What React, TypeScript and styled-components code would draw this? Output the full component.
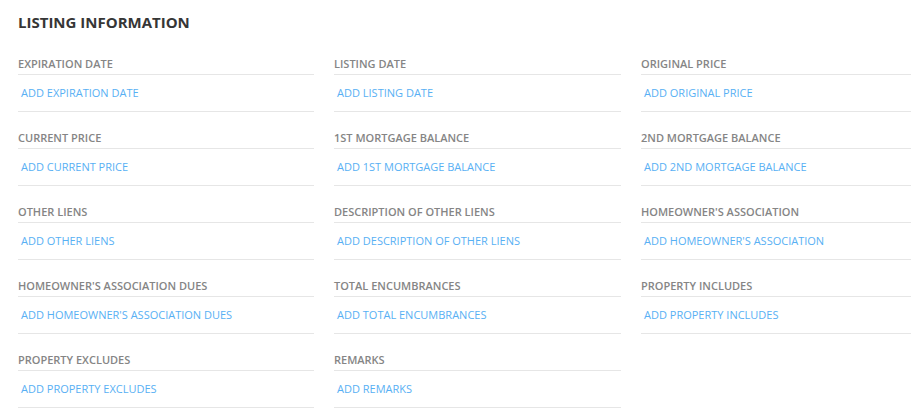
import styled, { createGlobalStyle } from "styled-components";

const GlobalStyle = createGlobalStyle`
  html, body {
    margin: 0;
    padding: 0;
    background: #fff;
    font-family: "Open Sans", "Liberation Sans", sans-serif;
  }
`;

const fields = [
  "Expiration Date",
  "Listing Date",
  "Original Price",
  "Current Price",
  "1st Mortgage Balance",
  "2nd Mortgage Balance",
  "Other Liens",
  "Description of Other Liens",
  "Homeowner's Association",
  "Homeowner's Association Dues",
  "Total Encumbrances",
  "Property Includes",
  "Property Excludes",
  "Remarks",
];

const Section = styled.section`
  padding: 12px 0 0 18px;
`;

const Title = styled.h2`
  margin: 0 0 24px;
  font-size: 15px;
  line-height: 20px;
  font-weight: 700;
  color: #363636;
  text-transform: uppercase;
`;

const Grid = styled.div`
  display: grid;
  grid-template-columns: 296px 287px 270px;
  column-gap: 20px;
  row-gap: 18px;
`;

const Field = styled.div`
  display: flex;
  flex-direction: column;
`;

const Label = styled.div`
  font-size: 11px;
  line-height: 16px;
  font-weight: 600;
  color: #858585;
  text-transform: uppercase;
  padding-bottom: 2px;
  border-bottom: 1px solid #e6e6e6;
`;

const AddLink = styled.a`
  display: block;
  padding: 10px 0 10px 3px;
  font-size: 11px;
  line-height: 16px;
  color: #58b0f4;
  text-transform: uppercase;
  text-decoration: none;
  cursor: pointer;
  border-bottom: 1px solid #e6e6e6;
`;

export default function App() {
  return (
    <>
      <GlobalStyle />
      <Section>
        <Title>Listing Information</Title>
        <Grid>
          {fields.map(f => (
            <Field key={f}>
              <Label>{f}</Label>
              <AddLink>Add {f}</AddLink>
            </Field>
          ))}
        </Grid>
      </Section>
    </>
  );
}
